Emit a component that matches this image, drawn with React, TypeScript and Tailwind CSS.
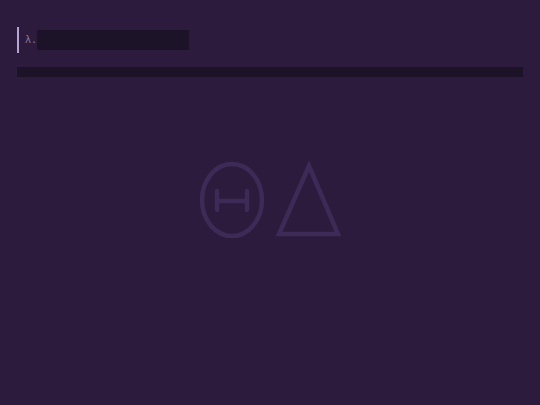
export default function App() {
  return (
    <div className="w-[540px] h-[405px] bg-[#2c1b3d] overflow-hidden relative font-['DejaVu_Sans_Mono',monospace]">
      <div className="pt-[27px] pl-[17px] pr-[17px]">
        <div className="flex items-center h-[26px] border-l-2 border-[#b6a3d3] pl-[6px]">
          <span className="w-[12px] text-[10px] leading-none text-[#85769a]">λ.</span>
          <div className="w-[152px] h-[20px] bg-[#1c1329]" />
        </div>
        <div className="mt-[14px] h-[10px] bg-[#1c1329]" />
      </div>
      <svg
        className="absolute left-[195px] top-[155px]"
        width="150"
        height="90"
        viewBox="195 155 150 90"
        fill="none"
        stroke="#3e2a56"
        strokeWidth="4.5"
        strokeLinecap="round"
      >
        <ellipse cx="232" cy="200" rx="30" ry="36" />
        <path d="M217 201H247M217 191V210M247 191V210" />
        <path d="M309 166L279 234H338Z" strokeLinejoin="miter" strokeLinecap="butt" />
      </svg>
    </div>
  );
}
